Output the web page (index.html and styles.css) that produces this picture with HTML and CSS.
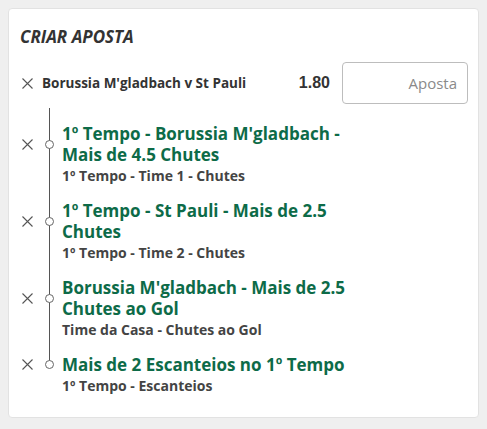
FILE: index.html
```html
<!DOCTYPE html>
<html lang="pt">
<head>
  <meta charset="UTF-8">
  <meta name="viewport" content="width=device-width, initial-scale=1.0">
  <title>Criar Aposta</title>
  <link rel="stylesheet" href="styles.css">
</head>
<body>
  <div class="card">
    <h2 class="card-title">CRIAR APOSTA</h2>

    <div class="event">
      <span class="close">
        <svg width="11" height="11" viewBox="0 0 11 11"><path d="M0.5 0.5 L10.5 10.5 M10.5 0.5 L0.5 10.5" stroke="#555" stroke-width="1.1" fill="none"/></svg>
      </span>
      <span class="event-name">Borussia M'gladbach v St Pauli</span>
      <span class="odds">1.80</span>
      <input type="text" class="stake" placeholder="Aposta">
    </div>

    <div class="legs">
      <div class="leg">
        <span class="rail"></span>
        <span class="close">
          <svg width="11" height="11" viewBox="0 0 11 11"><path d="M0.5 0.5 L10.5 10.5 M10.5 0.5 L0.5 10.5" stroke="#555" stroke-width="1.1" fill="none"/></svg>
        </span>
        <span class="dot"></span>
        <div class="leg-title">1º Tempo - Borussia M'gladbach - Mais de 4.5 Chutes</div>
        <div class="leg-sub">1º Tempo - Time 1 - Chutes</div>
      </div>

      <div class="leg">
        <span class="rail"></span>
        <span class="close">
          <svg width="11" height="11" viewBox="0 0 11 11"><path d="M0.5 0.5 L10.5 10.5 M10.5 0.5 L0.5 10.5" stroke="#555" stroke-width="1.1" fill="none"/></svg>
        </span>
        <span class="dot"></span>
        <div class="leg-title">1º Tempo - St Pauli - Mais de 2.5 Chutes</div>
        <div class="leg-sub">1º Tempo - Time 2 - Chutes</div>
      </div>

      <div class="leg">
        <span class="rail"></span>
        <span class="close">
          <svg width="11" height="11" viewBox="0 0 11 11"><path d="M0.5 0.5 L10.5 10.5 M10.5 0.5 L0.5 10.5" stroke="#555" stroke-width="1.1" fill="none"/></svg>
        </span>
        <span class="dot"></span>
        <div class="leg-title">Borussia M'gladbach - Mais de 2.5 Chutes ao Gol</div>
        <div class="leg-sub">Time da Casa - Chutes ao Gol</div>
      </div>

      <div class="leg last">
        <span class="rail"></span>
        <span class="close">
          <svg width="11" height="11" viewBox="0 0 11 11"><path d="M0.5 0.5 L10.5 10.5 M10.5 0.5 L0.5 10.5" stroke="#555" stroke-width="1.1" fill="none"/></svg>
        </span>
        <span class="dot"></span>
        <div class="leg-title">Mais de 2 Escanteios no 1º Tempo</div>
        <div class="leg-sub">1º Tempo - Escanteios</div>
      </div>
    </div>
  </div>
</body>
</html>
```

FILE: styles.css
```css
body {
    margin: 0;
    padding: 8px;
    background-color: #efefef;
    font-family: "Open Sans", "Noto Sans", sans-serif;
}

.card {
    background-color: #fff;
    border: 1px solid #e2e2e2;
    border-radius: 4px;
    height: 410px;
    box-sizing: border-box;
    padding: 14px 10px 0 11px;
}

.card-title {
    margin: 0;
    font-size: 17px;
    line-height: 28px;
    font-style: italic;
    font-weight: 700;
    color: #333;
}

.event {
    display: flex;
    align-items: center;
    margin-top: 11px;
}

.close {
    width: 22px;
    display: flex;
    align-items: center;
    padding-left: 2px;
    box-sizing: border-box;
}

.close svg {
    display: block;
}

.event-name {
    flex: 1;
    font-size: 13.5px;
    font-weight: 700;
    color: #333;
}

.odds {
    font-family: "Liberation Sans", Arial, sans-serif;
    font-size: 16px;
    font-weight: 700;
    color: #333;
    margin-right: 12px;
}

.stake {
    width: 126px;
    height: 42px;
    box-sizing: border-box;
    border: 1px solid #bdbdbd;
    border-radius: 4px;
    padding: 0 10px;
    text-align: right;
    font-family: "Open Sans", sans-serif;
    font-size: 15px;
    color: #333;
}

.stake::placeholder {
    color: #8a8a8a;
}

.legs {
    margin-top: 4px;
}

.leg {
    display: grid;
    grid-template-columns: 22px 14px 1fr;
    grid-template-rows: 15px auto auto;
}

.rail {
    grid-column: 2;
    grid-row: 1 / 4;
    justify-self: center;
    width: 1px;
    background-color: #555;
}

.leg.last .rail {
    grid-row: 1 / 3;
    align-self: start;
    height: calc(100% - 10px);
}

.leg .close {
    grid-column: 1;
    grid-row: 2;
}

.dot {
    grid-column: 2;
    grid-row: 2;
    align-self: center;
    justify-self: center;
    width: 9px;
    height: 9px;
    box-sizing: border-box;
    border: 1px solid #666;
    border-radius: 50%;
    background-color: #fff;
    z-index: 1;
}

.leg-title {
    grid-column: 3;
    grid-row: 2;
    padding-left: 6px;
    max-width: 295px;
    font-size: 17px;
    line-height: 21px;
    font-weight: 700;
    color: #0d6b48;
}

.leg-sub {
    grid-column: 3;
    grid-row: 3;
    padding-left: 6px;
    margin-top: 2px;
    font-size: 14px;
    line-height: 18px;
    font-weight: 700;
    color: #444;
}
```
